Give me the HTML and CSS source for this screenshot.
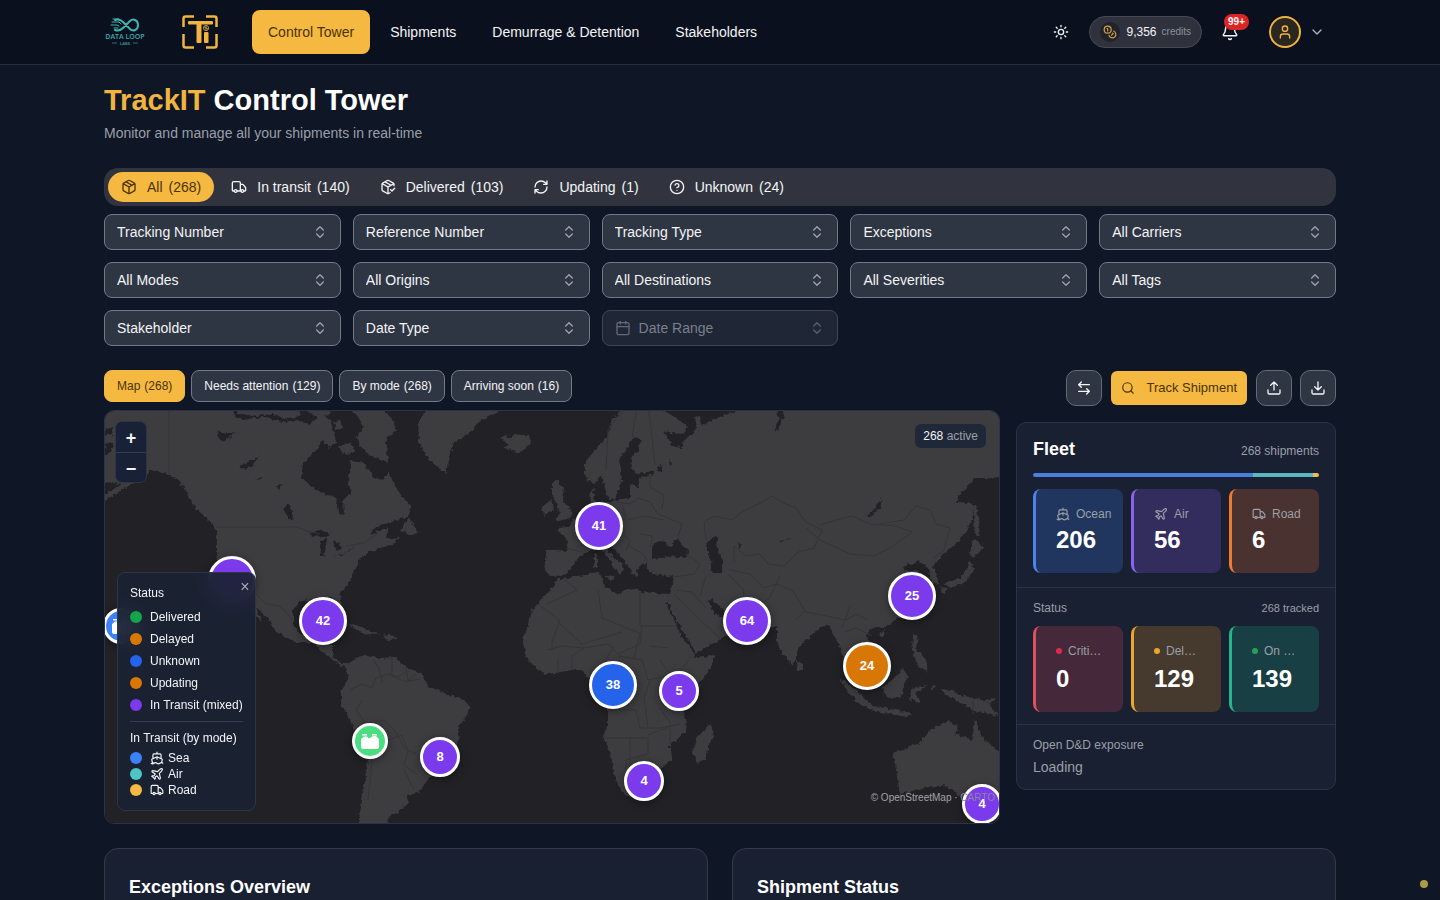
FILE: index.html
```html
<!DOCTYPE html>
<html lang="en">
<head>
<meta charset="utf-8">
<meta name="viewport" content="width=device-width, initial-scale=1">
<title>TrackIT Control Tower</title>
<link rel="stylesheet" href="styles.css">
</head>
<body>
<svg class="sprite" aria-hidden="true">
  <symbol id="i-sun" viewBox="0 0 24 24"><circle cx="12" cy="12" r="4"/><path d="M12 2v2M12 20v2M4.9 4.9l1.4 1.4M17.7 17.7l1.4 1.4M2 12h2M20 12h2M6.3 17.7l-1.4 1.4M19.1 4.9l-1.4 1.4"/></symbol>
  <symbol id="i-coins" viewBox="0 0 24 24"><circle cx="8" cy="8" r="6"/><path d="M18.09 10.37A6 6 0 1 1 10.34 18M7 6h1v4M16.71 13.88l.7.71-2.82 2.82"/></symbol>
  <symbol id="i-bell" viewBox="0 0 24 24"><path d="M10.27 21a2 2 0 0 0 3.46 0M3.26 15.33A1 1 0 0 0 4 17h16a1 1 0 0 0 .74-1.67C19.41 13.96 18 12.5 18 8A6 6 0 0 0 6 8c0 4.5-1.41 5.96-2.74 7.33"/></symbol>
  <symbol id="i-user" viewBox="0 0 24 24"><path d="M19 21v-2a4 4 0 0 0-4-4H9a4 4 0 0 0-4 4v2"/><circle cx="12" cy="7" r="4"/></symbol>
  <symbol id="i-down" viewBox="0 0 24 24"><path d="m6 9 6 6 6-6"/></symbol>
  <symbol id="i-updown" viewBox="0 0 24 24"><path d="m7 15 5 5 5-5M7 9l5-5 5 5"/></symbol>
  <symbol id="i-package" viewBox="0 0 24 24"><path d="M11 21.73a2 2 0 0 0 2 0l7-4A2 2 0 0 0 21 16V8a2 2 0 0 0-1-1.73l-7-4a2 2 0 0 0-2 0l-7 4A2 2 0 0 0 3 8v8a2 2 0 0 0 1 1.73zM12 22V12M3.29 7 12 12l8.71-5M7.5 4.27l9 5.15"/></symbol>
  <symbol id="i-packcheck" viewBox="0 0 24 24"><path d="m16 16 2 2 4-4M21 10V8a2 2 0 0 0-1-1.73l-7-4a2 2 0 0 0-2 0l-7 4A2 2 0 0 0 3 8v8a2 2 0 0 0 1 1.73l7 4a2 2 0 0 0 2 0l2-1.14M7.5 4.27l9 5.15M3.29 7 12 12l8.71-5M12 22V12"/></symbol>
  <symbol id="i-truck" viewBox="0 0 24 24"><path d="M14 18V6a2 2 0 0 0-2-2H4a2 2 0 0 0-2 2v11a1 1 0 0 0 1 1h2M15 18H9M19 18h2a1 1 0 0 0 1-1v-3.65a1 1 0 0 0-.22-.62l-3.48-4.35A1 1 0 0 0 17.52 8H14"/><circle cx="17" cy="18" r="2"/><circle cx="7" cy="18" r="2"/></symbol>
  <symbol id="i-refresh" viewBox="0 0 24 24"><path d="M3 12a9 9 0 0 1 9-9 9.75 9.75 0 0 1 6.74 2.74L21 8M21 3v5h-5M21 12a9 9 0 0 1-9 9 9.75 9.75 0 0 1-6.74-2.74L3 16M8 16H3v5"/></symbol>
  <symbol id="i-help" viewBox="0 0 24 24"><circle cx="12" cy="12" r="10"/><path d="M9.09 9a3 3 0 0 1 5.83 1c0 2-3 3-3 3M12 17h.01"/></symbol>
  <symbol id="i-calendar" viewBox="0 0 24 24"><path d="M8 2v4M16 2v4M3 10h18"/><rect x="3" y="4" width="18" height="18" rx="2"/></symbol>
  <symbol id="i-swap" viewBox="0 0 24 24"><path d="M8 3 4 7l4 4M4 7h16M16 21l4-4-4-4M20 17H4"/></symbol>
  <symbol id="i-search" viewBox="0 0 24 24"><circle cx="11" cy="11" r="8"/><path d="m21 21-4.3-4.3"/></symbol>
  <symbol id="i-upload" viewBox="0 0 24 24"><path d="M12 3v12M17 8l-5-5-5 5M21 15v4a2 2 0 0 1-2 2H5a2 2 0 0 1-2-2v-4"/></symbol>
  <symbol id="i-download" viewBox="0 0 24 24"><path d="M12 15V3M7 10l5 5 5-5M21 15v4a2 2 0 0 1-2 2H5a2 2 0 0 1-2-2v-4"/></symbol>
  <symbol id="i-ship" viewBox="0 0 24 24"><path d="M12 10.19V14M12 2v3M19 13V7a2 2 0 0 0-2-2H7a2 2 0 0 0-2 2v6M19.38 20A11.6 11.6 0 0 0 21 14l-8.19-3.64a2 2 0 0 0-1.62 0L3 14a11.6 11.6 0 0 0 2.81 7.76M2 21c.6.5 1.2 1 2.5 1 2.5 0 2.5-2 5-2 1.3 0 1.9.5 2.5 1s1.2 1 2.5 1c2.5 0 2.5-2 5-2 1.3 0 1.9.5 2.5 1"/></symbol>
  <symbol id="i-plane" viewBox="0 0 24 24"><path d="M17.8 19.2 16 11l3.5-3.5C21 6 21.5 4 21 3c-1-.5-3 0-4.5 1.5L13 8 4.8 6.2c-.5-.1-.9.1-1.1.5l-.3.5c-.2.5-.1 1 .3 1.3L9 12l-2 3H4l-1 1 3 2 2 3 1-1v-3l3-2 3.5 5.3c.3.4.8.5 1.3.3l.5-.2c.4-.3.6-.7.5-1.2z"/></symbol>
  <symbol id="i-cargo" viewBox="0 0 20 16"><path d="M2 1h5v1.500H2zM12 1h5v1.500h-5zM1 6l3-2.500h3l2 2 4-2.500h3l3 3v8q0 2-2 2H3q-2 0-2-2z"/></symbol>
</svg>

<header class="topbar">
  <div class="wrap topbar-row">
    <a class="brand" href="#" aria-label="Data Loop Labs">
      <svg class="logo-loop" viewBox="0 0 42 30">
        <g fill="none" stroke="#3fb3b0" stroke-width="2" stroke-linecap="round">
          <path d="M11 13c3 1 6 0 8-2l7-7c3-3 8-1 8 4s-5 7-8 4l-7-7c-2-2-5-3-8-2"/>
          <path stroke-width="1" d="M9 2h6M8 5h7l2 2M7 8h6l2 1M10 11h4"/>
        </g>
        <text class="logo-name" x="21" y="22" text-anchor="middle">DATA LOOP</text>
        <path d="M8 26h5M29 26h5" stroke="#2c6f78"/>
        <text class="logo-sub" x="21" y="28" text-anchor="middle">LABS</text>
      </svg>
    </a>
    <a class="brand" href="#" aria-label="TrackIT">
      <svg class="logo-ti" viewBox="0 0 36 34">
        <g fill="none" stroke="#f0b440" stroke-width="2.500">
          <path d="M1.500 12V3.500q0-2 2-2H12M24 1.500h8.500q2 0 2 2V12M34.500 19v11.500q0 2-2 2H24M12 32.500H3.500q-2 0-2-2V19"/>
        </g>
        <g fill="#f0b440"><rect x="6" y="6" width="25" height="3.500" rx="1"/><rect x="14.500" y="6" width="5" height="22" rx="1"/><rect x="22" y="17" width="4.500" height="11" rx="1"/></g>
        <circle cx="24" cy="13" r="2.600" fill="none" stroke="#c8963a"/><path d="M22 12l4 2M24 11v4" stroke="#c8963a"/>
      </svg>
    </a>
    <nav class="nav">
      <a class="nav-link is-active" href="#">Control Tower</a>
      <a class="nav-link" href="#">Shipments</a>
      <a class="nav-link" href="#">Demurrage &amp; Detention</a>
      <a class="nav-link" href="#">Stakeholders</a>
    </nav>
    <div class="tools">
      <button class="icon-btn" aria-label="Toggle theme"><svg class="icon"><use href="#i-sun"/></svg></button>
      <button class="credits"><span class="coin"><svg class="icon icon-sm"><use href="#i-coins"/></svg></span><span class="credits-num">9,356</span><span class="credits-unit">credits</span></button>
      <button class="icon-btn bell" aria-label="Notifications"><svg class="icon icon-lg"><use href="#i-bell"/></svg><span class="badge">99+</span></button>
      <button class="account" aria-label="Account"><span class="avatar"><svg class="icon"><use href="#i-user"/></svg></span><svg class="icon"><use href="#i-down"/></svg></button>
    </div>
  </div>
</header>

<main class="wrap page">
  <h1 class="title"><span class="accent">TrackIT</span> Control Tower</h1>
  <p class="subtitle">Monitor and manage all your shipments in real-time</p>

  <div class="status-tabs">
    <button class="status-tab is-active"><svg class="icon"><use href="#i-package"/></svg><span>All</span><span class="count">(268)</span></button>
    <button class="status-tab"><svg class="icon"><use href="#i-truck"/></svg><span>In transit</span><span class="count">(140)</span></button>
    <button class="status-tab"><svg class="icon"><use href="#i-packcheck"/></svg><span>Delivered</span><span class="count">(103)</span></button>
    <button class="status-tab"><svg class="icon"><use href="#i-refresh"/></svg><span>Updating</span><span class="count">(1)</span></button>
    <button class="status-tab"><svg class="icon"><use href="#i-help"/></svg><span>Unknown</span><span class="count">(24)</span></button>
  </div>

  <div class="filters">
    <label class="filter"><select aria-label="Tracking Number"><option>Tracking Number</option></select><svg class="icon chev"><use href="#i-updown"/></svg></label>
    <label class="filter"><select aria-label="Reference Number"><option>Reference Number</option></select><svg class="icon chev"><use href="#i-updown"/></svg></label>
    <label class="filter"><select aria-label="Tracking Type"><option>Tracking Type</option></select><svg class="icon chev"><use href="#i-updown"/></svg></label>
    <label class="filter"><select aria-label="Exceptions"><option>Exceptions</option></select><svg class="icon chev"><use href="#i-updown"/></svg></label>
    <label class="filter"><select aria-label="All Carriers"><option>All Carriers</option></select><svg class="icon chev"><use href="#i-updown"/></svg></label>
    <label class="filter"><select aria-label="All Modes"><option>All Modes</option></select><svg class="icon chev"><use href="#i-updown"/></svg></label>
    <label class="filter"><select aria-label="All Origins"><option>All Origins</option></select><svg class="icon chev"><use href="#i-updown"/></svg></label>
    <label class="filter"><select aria-label="All Destinations"><option>All Destinations</option></select><svg class="icon chev"><use href="#i-updown"/></svg></label>
    <label class="filter"><select aria-label="All Severities"><option>All Severities</option></select><svg class="icon chev"><use href="#i-updown"/></svg></label>
    <label class="filter"><select aria-label="All Tags"><option>All Tags</option></select><svg class="icon chev"><use href="#i-updown"/></svg></label>
    <label class="filter"><select aria-label="Stakeholder"><option>Stakeholder</option></select><svg class="icon chev"><use href="#i-updown"/></svg></label>
    <label class="filter"><select aria-label="Date Type"><option>Date Type</option></select><svg class="icon chev"><use href="#i-updown"/></svg></label>
    <label class="filter is-disabled"><svg class="icon lead"><use href="#i-calendar"/></svg><select aria-label="Date Range" disabled><option>Date Range</option></select><svg class="icon chev"><use href="#i-updown"/></svg></label>
  </div>

  <div class="board">
    <section class="board-main">
      <div class="views">
        <button class="view is-active"><span>Map</span><span>(268)</span></button>
        <button class="view"><span>Needs attention</span><span>(129)</span></button>
        <button class="view"><span>By mode</span><span>(268)</span></button>
        <button class="view"><span>Arriving soon</span><span>(16)</span></button>
      </div>
      <div class="map">
        <svg class="world" viewBox="105 411 894 412" preserveAspectRatio="xMidYMid slice" aria-hidden="true">
          <defs><filter id="coast" x="0" y="0" width="100%" height="100%"><feTurbulence type="fractalNoise" baseFrequency="0.25" numOctaves="2" seed="4"/><feDisplacementMap in="SourceGraphic" scale="5" xChannelSelector="R" yChannelSelector="G"/></filter></defs>
          <g filter="url(#coast)">
            <rect class="sea" x="85" y="391" width="934" height="452"/>
            <g class="land">
              <path d="M95 401H229L236 417 243 420 262 417 283 422 297 420 309 424 322 415 330 420 334 432 336 443 329 448 323 440 313 453 303 463 301 477 313 487 326 495 336 497 338 512 344 515 343 500 351 493 348 480 351 460 363 462 374 477 383 480 388 472 399 493 411 507 409 517 396 520 376 527 370 534 389 527 386 537 398 542 379 549 369 552 359 560 354 573 349 583 340 593 342 609 337 606 334 598 318 598 309 600 298 602 293 610 293 623 299 633 313 638 320 628 328 628 325 640 333 645 333 657 341 663 349 663 344 667 336 662 326 655 313 643 296 642 276 632 270 620 256 608 262 622 240 596 226 580 218 562 217 550 217 533 213 525 203 515 193 505 187 492 178 480 165 473 150 470 147 475 130 485 105 500 95 504 95 500 122 484 105 482 95 486z"/>
              <path d="M236 405L266 407 296 407 302 415 288 419 272 414 252 416 238 413zM306 405L328 405 330 415 318 418 308 412zM338 401H376L393 419 396 431 388 437 386 443 388 463 373 457 361 448 357 438 364 426 356 414z"/>
              <path d="M338 446L351 443 355 452 345 455zM334 422L340 420 343 428 336 430z"/>
              <path d="M409 517L413 525 419 533 411 535 401 530zM387 540L399 537 395 542 381 547z"/>
              <path d="M426 401L426 411 418 423 419 443 429 460 446 473 449 457 454 443 473 430 479 422 499 411 503 401z"/>
              <path d="M501 437L506 435 509 438 514 434 522 435 529 435 531 443 519 453 504 448 508 445z"/>
              <path d="M347 625L359 626 371 632 381 635 365 634 355 629zM381 636L390 635 398 639 388 640z"/>
              <path d="M349 663L363 655 379 658 394 657 406 667 421 673 429 687 449 695 464 700 471 708 459 727 458 747 446 767 433 773 418 793 406 795 409 803 397 813 389 815 386 833H357L363 793 368 760 367 740 353 727 341 703 341 692 349 677 344 667z"/>
              <path d="M620 401L620 411 612 420 607 437 595 450 585 462 585 474 587 480 595 483 602 475 604 484 608 497 614 501 617 494 622 482 621 470 619 460 625 452 632 440 636 436 641 440 638 450 632 458 631 468 636 474 645 473 652 470 654 474 648 476 638 478 639 488 632 484 630 490 630 498 620 499 613 502 606 501 600 505 595 502 593 492 596 488 590 490 591 503 585 510 573 520 568 527 558 528 560 533 565 536 568 545 567 551 556 550 547 550 545 560 545 567 548 575 557 577 566 574 572 566 576 560 580 556 588 552 595 549 602 550 606 556 612 563 616 570 620 575 623 569 621 563 614 558 608 550 606 546 611 546 617 552 624 559 628 566 633 574 637 577 637 569 641 565 646 562 647 568 651 574 660 575 668 576 674 575 670 594 655 593 642 592 632 588 624 590 618 595 612 591 604 586 602 580 600 573 590 574 578 576 563 579 557 579 550 590 547 593 538 604 532 610 529 623 524 635 523 642 526 657 533 664 540 671 547 674 560 672 572 670 583 670 586 677 592 678 600 690 608 710 608 723 603 737 608 748 612 760 613 773 618 784 623 793 630 797 642 795 650 790 658 778 663 765 672 760 671 748 668 746 676 740 685 733 686 720 682 708 690 696 700 682 708 672 713 663 715 655 705 657 695 658 692 650 682 637 676 624 668 608 664 602 668 602 672 612 678 622 686 637 692 646 695 653 705 648 717 641 727 636 737 628 728 616 722 618 714 613 708 600 712 599 718 606 727 612 740 618 760 622 770 628 777 626 777 640 780 650 786 658 792 665 797 658 798 648 806 640 817 630 827 624 831 628 834 636 838 643 842 655 846 668 852 680 858 685 858 676 852 668 850 655 856 650 864 655 872 664 877 662 878 655 872 645 866 636 870 630 876 627 884 628 894 621 904 615 914 605 924 597 928 588 924 580 922 573 916 570 908 571 903 568 907 563 912 566 917 561 922 564 928 568 930 576 933 584 938 583 937 575 933 568 936 562 943 555 952 547 960 540 967 530 972 520 974 507 968 503 957 502 960 494 967 487 975 478 985 478 1009 477 1009 401 737 401 737 411 725 415 712 420 701 426 699 416 695 417 697 427 692 434 684 440 681 448 672 446 668 438 663 430 672 433 682 434 688 427 678 419 668 413 657 409 650 401z"/>
              <path d="M552 483L559 480 559 485 564 487 562 500 573 513 570 518 555 522 560 513 557 504 552 496zM542 507L552 499 554 510 544 516zM594 553h3v14h-3zM604 576H614L612 581z"/>
              <path d="M973 503L977 507 980 536 975 533zM974 538L984 548 978 553 972 558 969 553zM970 560L974 570 965 582 951 588 944 584 960 578 967 570zM940 587L946 588 946 595 942 594zM984 548L999 541"/>
              <path d="M710 723L714 731 705 760 697 763 693 753 697 738zM797 660L803 665 802 670 798 670zM879 633L885 630 884 636 880 636z"/>
              <path d="M840 678L854 688 872 705 873 711 861 705 847 691zM873 706L895 709 913 714 907 717 873 711zM882 688L892 680 903 669 908 676 905 684 900 698 887 697zM911 688L928 686 916 692 920 702 917 704 912 697 910 704z"/>
              <path d="M913 634L918 636 916 648 926 660 928 671 918 667 912 649zM940 689L950 690 960 695 987 701 998 716 988 713 973 711 963 704 951 698zM932 682L935 688 932 690zM984 700L996 698 990 703z"/>
              <path d="M893 753L920 743 930 730 947 721 959 727 955 734 972 740 975 720 983 738 1009 760V820H979L964 800 956 792 944 785 923 788 900 794 897 776z"/>
            </g>
            <g class="sea">
              <path d="M653 542L663 540 670 547 678 538 682 545 688 550 687 558 671 556 652 559 652 550zM705 542L718 536 716 546 722 560 722 573 712 573 710 558z"/>
              <path d="M217 430L225 434 235 432 229 438 221 442 219 436zM238 466L248 462 260 456 252 465 246 469zM255 480L263 476 261 479zM284 505L289 505 294 518 291 521 285 513zM277 486L281 484 279 492zM309 535L319 529 329 534 327 537 315 536zM320 541L327 539 324 557 321 555zM332 541L339 542 342 549 336 550zM334 556L350 551 354 547 342 555z"/>
              <path d="M776 411L779 420 774 432 778 430 784 416 783 411zM105 430L113 427 112 435 105 435zM105 444L112 442 112 451 105 454zM657 467L662 465 662 472 658 471zM669 458L672 464 670 466zM738 541L741 547 739 548zM780 541L795 538 787 539 781 543zM867 516L875 509 882 497 880 508 871 516z"/>
            </g>
          </g>
          <g class="border">
            <path d="M169 411v63M216 527h80l12 4 12 3M346 546l18-3 14-10M236 590l20 4 10 10 14 2 13 14M316 640l8-4M373 660l6 8 3 14M350 690l12-6 10 4 4-10 12-4 10 3 8-5M406 667l2 14 12-2M362 700l-6 10 10 14 18-4 12 12 8 16 12 6M372 755l8-12 22-8 6 16-4 14 14 10M372 760l-4 40M404 770l10 20M392 658v18l14 6 10-8"/>
            <path d="M606 470l2-40 14-18M632 438l4-26M655 465l-6-54M650 475v12l14 8-2 14M616 502l14 2 8-6 12 4 8 12 24 10-4 12M602 500l-4 20-20 4M600 533l10-4 12 4 8 8-4 10M622 504l4 14-8 8M628 520l16-4 20 4M640 534l12 2-2 12M566 548l16 4M628 545l16 10 4 8M674 577l20-3 6-10-14-10M706 540l-2-18 10-6 18 4 10-8 20-10 10-6 14 8 10 4 10 14 16 8-8 18-16 4-14 14-16-2-8-10-14 2-12-10v16"/>
            <path d="M820 525l16-5 16-4 18 8 26 2 16 6-22 16-16 8-24-2-30-14-14-12M880 524l24-4 12-14 14 4 6 14 14 4-6 22-10 8M730 570l20 4 14 14 12-4 16 6 14 22 40 8 10-6 12 6M728 574l16 16-2 18 18 4M706 576l-6 20M780 575l-10 22-20 16M806 610l-10 10M850 606l-8 22M676 590l16 2 14 16M674 594l24 24 22 20M640 592v34h36M598 590l4 28 40 16M540 606l20 14-8 22v8M556 620l26 24 40-12M548 650l14-4 22 2 24-4 10 10 22-10 2-18"/>
            <path d="M558 673v-14M572 670v-14l12-8M598 672l16-26M618 656l24 4 6 20 30-6 14-18M640 634l-6 24M650 680l-6 18 4 30M660 660l16 22-4 20M608 710h28l4 18h20l20-4M606 738h42v16l-22 6v20M648 735l20-8M630 738v38M650 760l-14 14 20 6M660 708l10 14 0 22M668 648l-18-2M563 578l14 12-30 14M846 632l10-4 16 8M973 700v14"/>
          </g>
        </svg>

        <span class="marker marker-lg m-mixed" style="--x:127;--y:169"></span>
        <span class="marker marker-sm m-sea" style="--x:16;--y:215"><svg class="cargo"><use href="#i-cargo"/></svg></span>
        <span class="marker marker-lg m-mixed" style="--x:218;--y:210">42</span>
        <span class="marker marker-lg m-mixed" style="--x:494;--y:115">41</span>
        <span class="marker marker-lg m-mixed" style="--x:642;--y:210">64</span>
        <span class="marker marker-lg m-mixed" style="--x:807;--y:185">25</span>
        <span class="marker marker-lg m-delay" style="--x:762;--y:255">24</span>
        <span class="marker marker-lg m-unknown" style="--x:508;--y:274">38</span>
        <span class="marker m-mixed" style="--x:574;--y:280">5</span>
        <span class="marker marker-sm m-done" style="--x:265;--y:330"><svg class="cargo"><use href="#i-cargo"/></svg></span>
        <span class="marker m-mixed" style="--x:335;--y:346">8</span>
        <span class="marker m-mixed" style="--x:539;--y:370">4</span>
        <span class="marker m-mixed" style="--x:877;--y:393">4</span>

        <div class="zoom"><button aria-label="Zoom in">+</button><button aria-label="Zoom out">−</button></div>
        <div class="active-pill"><span>268</span> <span class="muted">active</span></div>

        <aside class="legend">
          <button class="close" aria-label="Close legend">×</button>
          <p class="legend-head">Status</p>
          <ul class="legend-list">
            <li><i class="dot c-green"></i>Delivered</li>
            <li><i class="dot c-orange"></i>Delayed</li>
            <li><i class="dot c-blue"></i>Unknown</li>
            <li><i class="dot c-orange"></i>Updating</li>
            <li><i class="dot c-purple"></i>In Transit (mixed)</li>
          </ul>
          <p class="legend-head legend-split">In Transit (by mode)</p>
          <ul class="mode-list">
            <li><i class="dot c-sea"></i><svg class="icon icon-sm"><use href="#i-ship"/></svg>Sea</li>
            <li><i class="dot c-air"></i><svg class="icon icon-sm"><use href="#i-plane"/></svg>Air</li>
            <li><i class="dot c-road"></i><svg class="icon icon-sm"><use href="#i-truck"/></svg>Road</li>
          </ul>
        </aside>
        <div class="credit-line">© OpenStreetMap · <span>CARTO</span></div>
      </div>
    </section>

    <aside class="board-side">
      <div class="actions">
        <button class="square" aria-label="Compare"><svg class="icon"><use href="#i-swap"/></svg></button>
        <button class="track"><svg class="icon icon-sm"><use href="#i-search"/></svg>Track Shipment</button>
        <button class="square" aria-label="Upload"><svg class="icon"><use href="#i-upload"/></svg></button>
        <button class="square" aria-label="Download"><svg class="icon"><use href="#i-download"/></svg></button>
      </div>
      <div class="fleet">
        <section class="fleet-part fleet-top">
          <div class="row"><h2 class="fleet-title">Fleet</h2><span class="muted">268 shipments</span></div>
          <div class="bar"><i class="c-bar-sea" style="flex-grow:206"></i><i class="c-bar-air" style="flex-grow:56"></i><i class="c-bar-road" style="flex-grow:6"></i></div>
          <div class="tiles">
            <div class="tile t-ocean"><p><svg class="icon icon-sm"><use href="#i-ship"/></svg>Ocean</p><strong>206</strong></div>
            <div class="tile t-air"><p><svg class="icon icon-sm"><use href="#i-plane"/></svg>Air</p><strong>56</strong></div>
            <div class="tile t-road"><p><svg class="icon icon-sm"><use href="#i-truck"/></svg>Road</p><strong>6</strong></div>
          </div>
        </section>
        <section class="fleet-part fleet-mid">
          <div class="row"><span class="muted">Status</span><span class="muted small">268 tracked</span></div>
          <div class="tiles tiles-status">
            <div class="tile t-crit"><p><i></i>Criti…</p><strong>0</strong></div>
            <div class="tile t-delay"><p><i></i>Del…</p><strong>129</strong></div>
            <div class="tile t-ontime"><p><i></i>On …</p><strong>139</strong></div>
          </div>
        </section>
        <section class="fleet-part fleet-end">
          <p class="muted">Open D&amp;D exposure</p>
          <p class="loading">Loading</p>
        </section>
      </div>
    </aside>
  </div>

  <div class="cards">
    <section class="card"><h2>Exceptions Overview</h2></section>
    <section class="card"><h2>Shipment Status</h2></section>
  </div>
</main>
<span class="live-dot"></span>
</body>
</html>
```

FILE: styles.css
```css
* { box-sizing: border-box; }
body {
  margin: 0;
  height: 100vh;
  overflow: hidden;
  background: #0f1625;
  color: #f3f4f6;
  font: 14px/20px "Liberation Sans", Arial, sans-serif;
}
h1, h2, p, ul { margin: 0; padding: 0; list-style: none; }
button, select { font: inherit; color: inherit; border: 0; background: none; padding: 0; }
button { cursor: pointer; white-space: nowrap; }
a { color: inherit; text-decoration: none; }
.sprite { display: none; }
.icon {
  width: 16px;
  height: 16px;
  flex: none;
  fill: none;
  stroke: currentColor;
  stroke-width: 2;
  stroke-linecap: round;
  stroke-linejoin: round;
}
.icon-sm { width: 14px; height: 14px; }
.icon-lg { width: 18px; height: 18px; }
.muted { color: #9b9fa8; }
.small { font-size: 11px; }
.wrap { max-width: 1232px; margin: 0 auto; }

/* Header */
.topbar { background: #0a101d; border-bottom: 1px solid #252c3b; }
.topbar-row { display: flex; align-items: center; height: 64px; }
.brand { display: flex; }
.logo-loop { width: 42px; height: 30px; margin-right: 36px; }
.logo-name { font: 600 7px "Open Sans", sans-serif; fill: #3fa9ad; }
.logo-sub { font: bold 4px "Open Sans", sans-serif; fill: #3c8c94; }
.logo-ti { width: 36px; height: 34px; margin-right: 34px; }
.nav { display: flex; gap: 4px; }
.nav-link { padding: 12px 16px; border-radius: 8px; }
.nav-link.is-active { background: #f5b841; color: #4a3306; }
.tools { display: flex; align-items: center; margin-left: auto; padding-right: 11px; }
.icon-btn { display: flex; align-items: center; justify-content: center; width: 40px; height: 36px; position: relative; }
.credits {
  display: flex;
  align-items: center;
  height: 32px;
  margin: 0 8px;
  padding: 0 10px;
  border: 1px solid #464954;
  border-radius: 16px;
  background: #2f313d;
}
.coin { display: flex; align-items: center; justify-content: center; width: 20px; height: 20px; border-radius: 50%; background: #20222c; color: #d9a441; }
.credits-num { margin: 0 5px 0 7px; font-size: 12px; }
.credits-unit { font-size: 10px; color: #8d919b; }
.badge {
  position: absolute;
  top: 0;
  right: 1px;
  padding: 0 4px;
  border-radius: 8px;
  background: #dc2626;
  font: bold 10px/16px "Liberation Sans", sans-serif;
}
.account { display: flex; align-items: center; gap: 8px; margin-left: 19px; color: #aeb2ba; }
.avatar { display: flex; align-items: center; justify-content: center; width: 32px; height: 32px; border: 2px solid #f0b440; border-radius: 50%; background: #2a2620; color: #f0b440; }

/* Heading */
.page { padding-top: 17px; }
.title { font-size: 29px; line-height: 36px; color: #fff; }
.accent { color: #f0b440; }
.subtitle { margin: 5px 0 25px; color: #9b9fa8; }

/* Status tabs and filters */
.status-tabs { display: flex; gap: 4px; padding: 4px; border-radius: 14px; background: #31343f; }
.status-tab { display: flex; align-items: center; height: 30px; padding: 0 13px; border-radius: 15px; }
.status-tab .icon { margin-right: 10px; }
.status-tab .count { margin-left: 6px; }
.status-tab.is-active { background: #f5b841; color: #4a3306; }
.filters { display: grid; grid-template-columns: repeat(5, minmax(0, 1fr)); gap: 12px; margin-top: 8px; }
.filter { position: relative; }
.filter select {
  display: block;
  width: 100%;
  height: 36px;
  padding: 0 40px 0 12px;
  border: 1px solid #737985;
  border-radius: 8px;
  background: #2f3643;
  appearance: none;
  opacity: 1;
}
.chev { position: absolute; right: 13px; top: 10px; color: #9ca1ab; pointer-events: none; }
.lead { position: absolute; left: 13px; top: 10px; color: #636976; }
.filter.is-disabled select { padding-left: 36px; border-color: #3f4553; background: #1f2636; color: #7b808b; }
.filter.is-disabled .chev { color: #596070; }

/* Board */
.board { display: grid; grid-template-columns: minmax(0, 1fr) 320px; gap: 16px; margin-top: 24px; }
.views { display: flex; gap: 6px; margin-bottom: 8px; }
.view { display: flex; align-items: center; gap: 4px; height: 32px; padding: 0 12px; border: 1px solid #737985; border-radius: 8px; background: #2f3643; font-size: 12px; }
.view.is-active { border-color: #f5b841; background: #f5b841; color: #4a3306; }

.map { position: relative; overflow: hidden; border: 1px solid #2c3344; border-radius: 10px; }
.world { display: block; width: 100%; aspect-ratio: 894 / 412; background: #222126; }
.sea { fill: #222126; }
.land { fill: #3e3e40; }
.border { fill: none; stroke: #343437; stroke-width: 1; stroke-linejoin: round; }
.marker {
  position: absolute;
  left: calc(var(--x) / 894 * 100%);
  top: calc(var(--y) / 412 * 100%);
  display: flex;
  align-items: center;
  justify-content: center;
  width: 40px;
  height: 40px;
  transform: translate(-50%, -50%);
  border: 3px solid #fff;
  border-radius: 50%;
  box-shadow: 0 2px 8px rgba(0, 0, 0, .4);
  font-size: 13px;
  font-weight: bold;
  color: #fff;
}
.marker-lg { width: 48px; height: 48px; }
.marker-sm { width: 36px; height: 36px; }
.m-mixed, .c-purple { background: #7c3aed; }
.m-sea { background: #3b82f6; }
.m-delay, .c-orange { background: #d97706; }
.m-unknown, .c-blue { background: #2563eb; }
.m-done { background: #4ade80; }
.cargo { width: 20px; height: 16px; fill: #fff; }

.zoom { position: absolute; left: 10px; top: 10px; display: flex; flex-direction: column; width: 32px; border: 1px solid #2c3648; border-radius: 7px; background: #192136; }
.zoom button { height: 30px; padding-top: 2px; font: bold 18px/28px "Liberation Sans", sans-serif; }
.zoom button + button { border-top: 1px solid #343c4e; }
.active-pill { position: absolute; top: 13px; right: 13px; padding: 4px 8px; border-radius: 6px; background: #1f2838; font-size: 12px; line-height: 16px; }
.legend {
  position: absolute;
  left: 12px;
  bottom: 12px;
  padding: 12px;
  border: 1px solid #2d3547;
  border-radius: 8px;
  background: rgba(26, 33, 51, .93);
  backdrop-filter: blur(8px);
  font-size: 12px;
  line-height: 16px;
}
.close { position: absolute; top: 6px; right: 5px; font-size: 16px; line-height: 16px; color: #a5a9b2; }
.legend-list { display: grid; gap: 6px; margin: 8px 0 8px; }
.legend li { display: flex; align-items: center; gap: 8px; }
.legend-split { padding-top: 8px; border-top: 1px solid #343c4e; }
.mode-list { margin: 4px 0 0; }
.legend .mode-list li { gap: 4px; }
.mode-list .dot { margin-right: 4px; }
.dot { width: 12px; height: 12px; border-radius: 50%; }
.c-green { background: #16a34a; }
.c-sea { background: #3b82f6; }
.c-air { background: #4fc4c4; }
.c-road { background: #f5b841; }
.credit-line { position: absolute; right: 4px; bottom: 17px; font-size: 10px; line-height: 16px; color: #a3a3a7; }
.credit-line span { color: #8b85a0; }

/* Fleet panel */
.actions { display: flex; align-items: center; justify-content: flex-end; gap: 8px; margin-bottom: 16px; }
.square { display: flex; align-items: center; justify-content: center; width: 36px; height: 36px; border: 1px solid #646a77; border-radius: 10px; background: #2f3643; }
.track { display: flex; align-items: center; gap: 11px; height: 34px; margin: 0 1px; padding: 0 10px; border-radius: 6px; background: #f5b841; color: #4a3306; font-size: 13px; }
.fleet { border: 1px solid #2b3344; border-radius: 10px; background: #192032; font-size: 12px; line-height: 16px; }
.fleet-part { padding: 12px 16px; }
.fleet-part + .fleet-part { border-top: 1px solid #2b3344; }
.fleet-top { padding: 16px 16px 14px; }
.row { display: flex; align-items: center; justify-content: space-between; }
.fleet-title { font-size: 18px; line-height: 20px; color: #fff; }
.fleet-top .row .muted { padding-top: 3px; }
.bar { display: flex; height: 4px; margin: 14px 0 12px; border-radius: 2px; overflow: hidden; }
.c-bar-sea { background: #4a7fe0; }
.c-bar-air { background: #5cb8c0; }
.c-bar-road { background: #eebb58; }
.tiles { display: grid; grid-template-columns: repeat(3, minmax(0, 1fr)); gap: 8px; }
.tile { height: 84px; padding: 17px 0 0 20px; border-left: 3px solid; border-radius: 8px; }
.tile p { display: flex; align-items: center; gap: 6px; color: #9b9fa8; }
.tile strong { display: block; margin-top: 4px; font-size: 24px; line-height: 28px; color: #fff; }
.tile i { width: 6px; height: 6px; border-radius: 50%; }
.tiles-status { margin-top: 10px; }
.tiles-status .tile { height: 86px; }
.tiles-status strong { margin-top: 6px; }
.t-ocean { border-color: #4a85ea; background: #20365e; }
.t-air { border-color: #8b62ee; background: #332d5e; }
.t-road { border-color: #ee7a30; background: #4a3230; }
.t-crit { border-color: #e04f5c; background: #452839; }
.t-crit i { background: #e0294f; }
.t-delay { border-color: #eba52a; background: #453a2d; }
.t-delay i { background: #eba52a; }
.t-ontime { border-color: #25b58a; background: #184044; }
.t-ontime i { background: #2a9d55; }
.loading { margin-top: 4px; font-size: 14px; line-height: 20px; color: #9b9fa8; }

/* Lower cards */
.cards { display: grid; grid-template-columns: repeat(2, minmax(0, 1fr)); gap: 24px; margin-top: 24px; }
.card { min-height: 280px; padding: 24px; border: 1px solid #363a45; border-radius: 14px; background: #192032; }
.card h2 { font-size: 18px; line-height: 28px; color: #fff; }
.live-dot { position: fixed; right: 12px; bottom: 12px; width: 8px; height: 8px; border-radius: 50%; background: #aa9c45; }
```
